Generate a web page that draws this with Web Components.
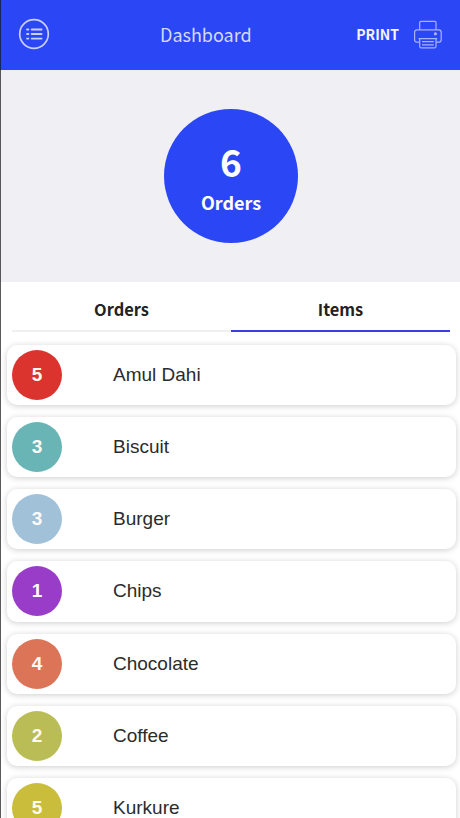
<!DOCTYPE html>
<html lang="en"><head><meta charset="utf-8"><title>Dashboard</title>
<style>
html,body{margin:0;height:818px;overflow:hidden;background:#fff}
body{font-family:"Noto Sans CJK SC","Noto Sans",sans-serif}
</style></head><body>
<dashboard-app></dashboard-app>
<script>
function define(name, html) {
  customElements.define(name, class extends HTMLElement {
    constructor() {
      super();
      const t = document.createElement('template');
      t.innerHTML = html;
      this.attachShadow({mode: 'open'}).append(t.content.cloneNode(true));
    }
  });
}
define('list-icon', `<style>:host{display:block;width:32px;height:32px}svg{display:block}</style>
<svg width="32" height="32" viewBox="0 0 32 32" fill="none" stroke="#c9cefb">
<circle cx="16" cy="16" r="14.3" stroke-width="1.7"/>
<path d="M13.7 11.5H23.6M13.7 16H23.6M13.7 20.6H23.6" stroke-width="1.8" stroke-linecap="round"/>
<path d="M9 11.5H10.4M9 16H10.4M9 20.6H10.4" stroke-width="1.8" stroke-linecap="round"/></svg>`);
define('print-icon', `<style>:host{display:block;width:30px;height:30px}svg{display:block}</style>
<svg width="30" height="30" viewBox="0 0 30 30" fill="none" stroke="#a9b3fb" stroke-width="1.2">
<path d="M6.7 9.8V2.4Q6.7 1.4 7.7 1.4H22Q23 1.4 23 2.4V9.8"/>
<path d="M6.7 22.2H4.1Q1.6 22.2 1.6 19.7V12.3Q1.6 9.8 4.1 9.8H25.7Q28.2 9.8 28.2 12.3V19.7Q28.2 22.2 25.7 22.2H23"/>
<path d="M5.6 18.6H24.2M6.7 18.6V26.4Q6.7 27.9 8.2 27.9H21.5Q23 27.9 23 26.4V18.6M9 21.7H20.8M9 24.8H20.8"/>
<circle cx="22.4" cy="13.8" r="1" fill="#c9cefb"/></svg>`);
define('app-header', `<style>
:host{display:flex;align-items:center;height:70px;box-sizing:border-box;padding:0 17px 2px 18px;background:#2b46f5;color:#d5d9fd}
.t{font-size:18px;line-height:26px;margin-left:110px;padding-bottom:1px}
.r{margin-left:auto;display:flex;align-items:center;gap:14px;font-weight:700;font-size:14px;line-height:20px;color:#f3f4ff}
print-icon{margin-top:1px}
</style><list-icon></list-icon><div class="t"><slot></slot></div><div class="r"><span>PRINT</span><print-icon></print-icon></div>`);
define('order-total', `<style>
:host{display:flex;justify-content:center;align-items:center;height:212px;background:#efeff4;padding-left:2px}
.c{width:134px;height:134px;border-radius:50%;background:#2b46f5;color:#fff;display:flex;flex-direction:column;align-items:center;font-weight:700}
.n{font-size:37px;line-height:44px;margin-top:30px}.l{font-size:18px;line-height:26px;margin-top:6px}
</style><div class="c"><div class="n"><slot name="count"></slot></div><div class="l"><slot></slot></div></div>`);
define('tab-item', `<style>
:host{flex:1;display:flex;justify-content:center;box-sizing:border-box;height:50px;padding-top:14px;font-size:16.4px;line-height:26px;font-weight:700;color:#222;border-bottom:2px solid #f0f0f1}
:host([active]){border-bottom-color:#3b3ddd}</style><slot></slot>`);
define('tab-bar', `<style>:host{display:flex;height:51px;padding:0 10px 0 12px}</style><slot></slot>`);
define('item-card', `<style>
:host{display:flex;align-items:center;height:60.25px;flex:none;box-sizing:border-box;padding-left:5px;background:#fff;border-radius:10px;box-shadow:0 1px 6px rgba(0,0,0,.2);font-family:"Liberation Sans",Arial,sans-serif;font-size:19px;color:#2b2b2b}
.b{flex:none;width:50px;height:50px;margin-right:51px;border-radius:50%;background:var(--badge);color:#fffaf5;display:flex;align-items:center;justify-content:center;font-weight:700;font-size:19px}
.b,.n{line-height:22px}.b slot{display:block}</style>
<div class="b"><span><slot name="qty"></slot></span></div><div class="n"><slot></slot></div>`);
define('item-list', `<style>:host{display:flex;flex-direction:column;gap:12px;padding:11.5px 4px 0 7px;background:#fff}</style><slot></slot>`);
define('dashboard-app', `<style>
:host{display:block;position:relative;height:818px;overflow:hidden;background:#fff}
.edge{position:absolute;left:0;top:0;width:1px;height:818px;background:rgba(20,20,25,.7)}
</style>
<app-header>Dashboard</app-header>
<order-total><span slot="count">6</span>Orders</order-total>
<tab-bar><tab-item>Orders</tab-item><tab-item active>Items</tab-item></tab-bar>
<item-list>
${[['5','Amul Dahi','#db342e'],['3','Biscuit','#69b5b5'],['3','Burger','#a0c1d8'],['1','Chips','#993cc7'],['4','Chocolate','#dc7558'],['2','Coffee','#babc55'],['5','Kurkure','#c9bd3b']]
  .map(([q,n,c]) => `<item-card style="--badge:${c}"><span slot="qty">${q}</span>${n}</item-card>`).join('')}
</item-list><div class="edge"></div>`);
</script></body></html>
